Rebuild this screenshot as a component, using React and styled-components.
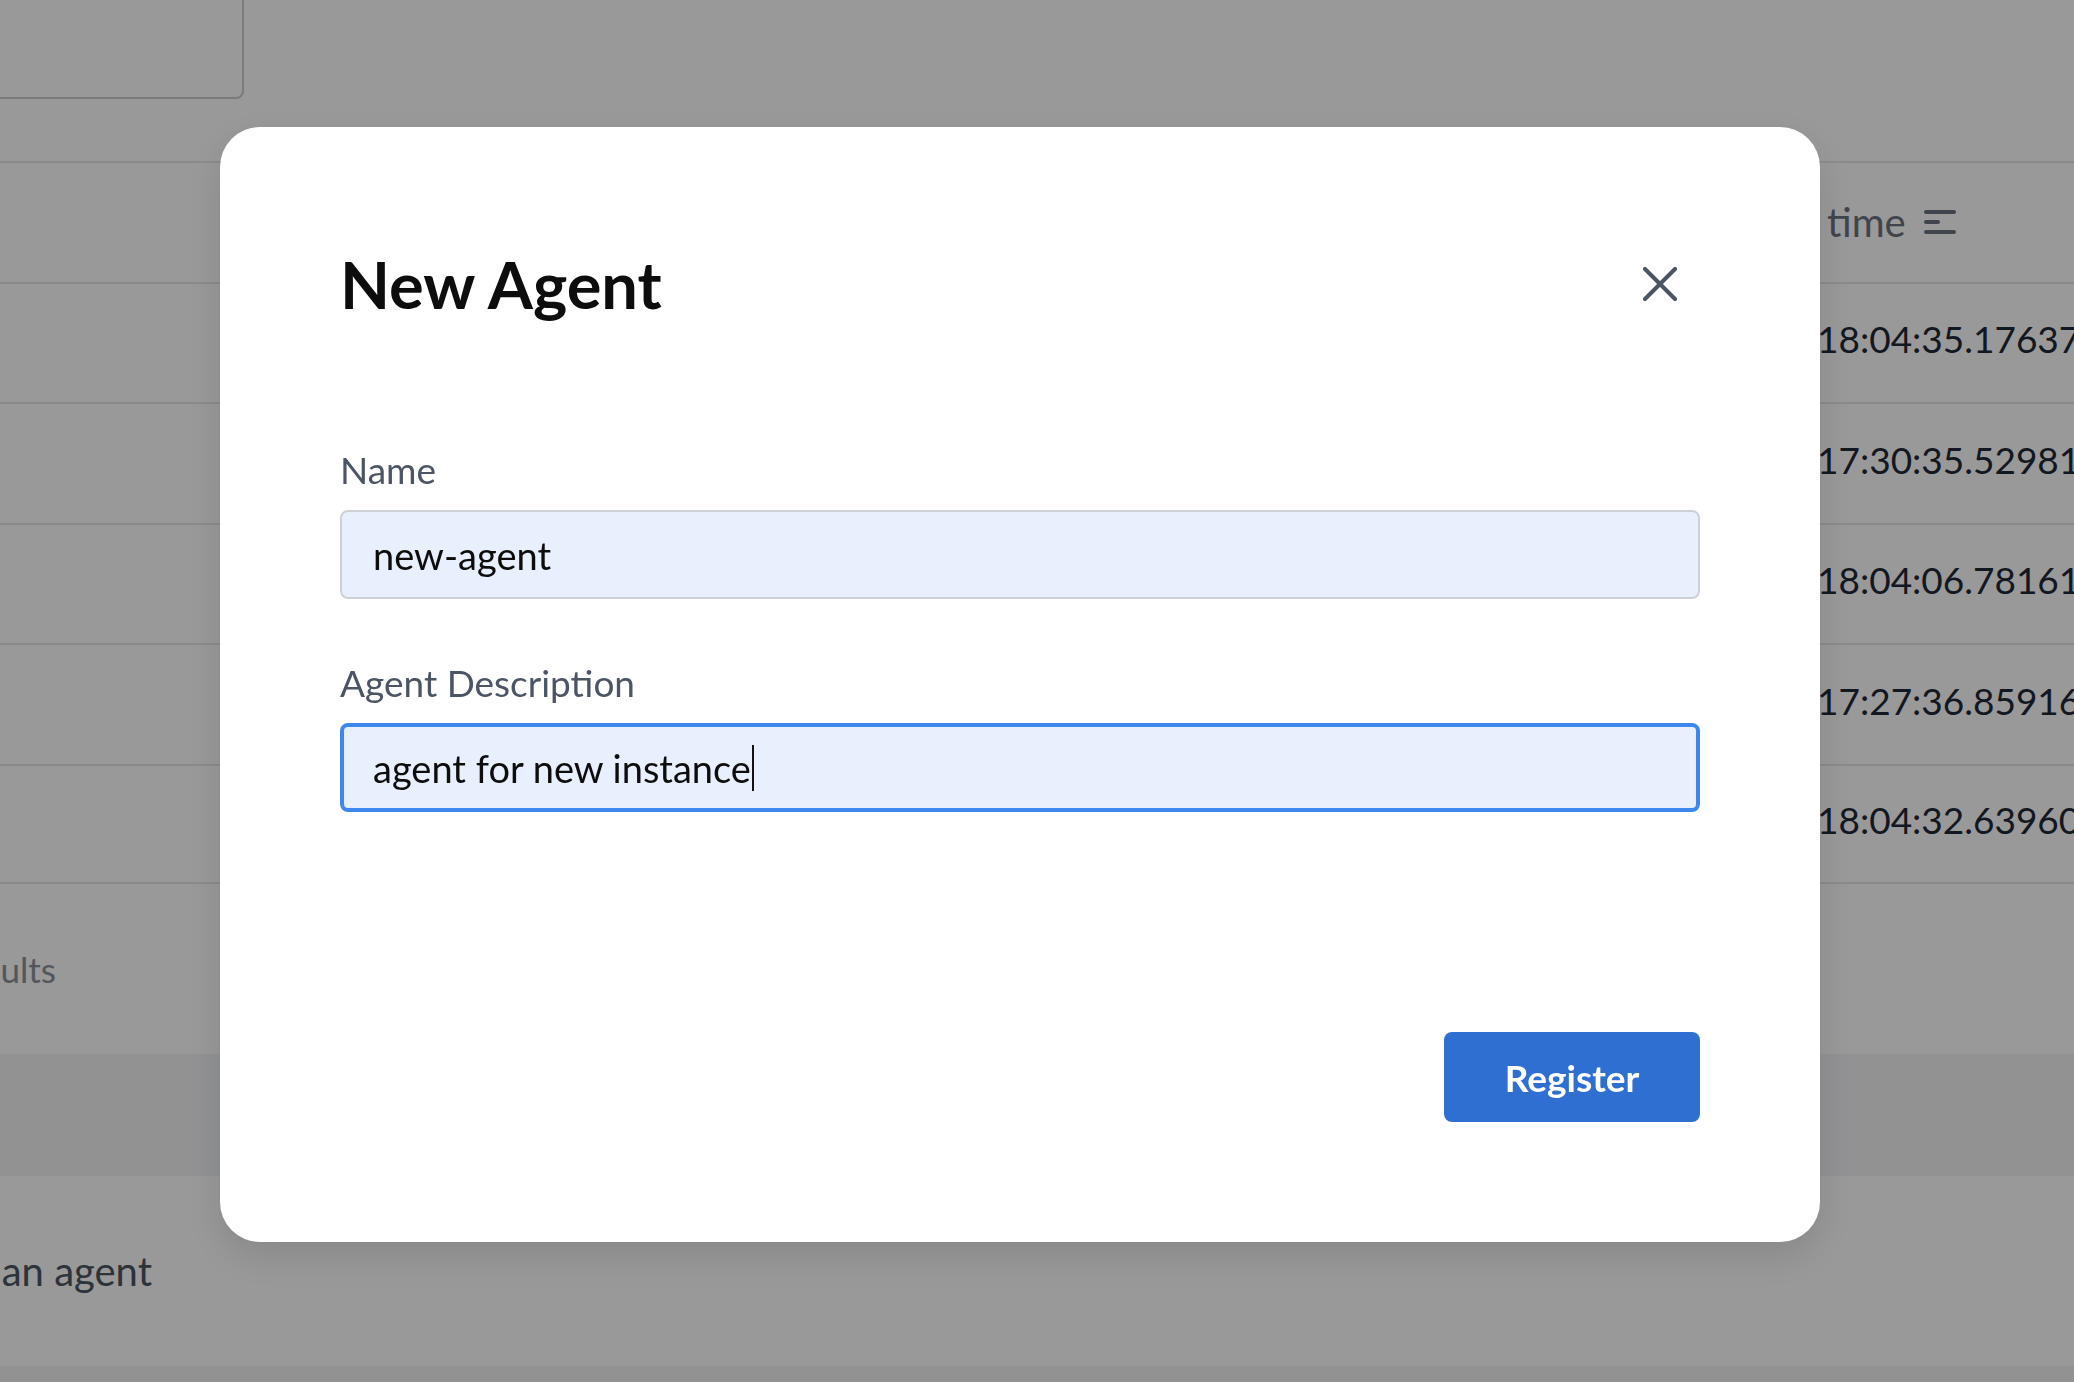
import React from "react";
import styled, { createGlobalStyle } from "styled-components";

const GlobalStyle = createGlobalStyle`
  * {
    box-sizing: border-box;
  }
  html,
  body {
    margin: 0;
    padding: 0;
    overflow: hidden;
    background: #ffffff;
  }
  body {
    font-family: "Lato", "Noto Sans", sans-serif;
    color: #1f2937;
  }
`;

const Page = styled.div`
  width: 2074px;
  height: 1382px;
  overflow: hidden;
  background: #ffffff;
`;

const TopBar = styled.div`
  display: flex;
  align-items: flex-start;
  height: 161px;
`;

const SearchBox = styled.div`
  width: 264px;
  height: 119px;
  margin: -20px 0 0 -20px;
  border: 2px solid #cbced3;
  border-radius: 8px;
`;

const Row = styled.div`
  display: grid;
  grid-template-columns: 1817px 1fr;
  align-items: center;
  height: 120.5px;
  border-top: 2px solid #e5e7eb;
  white-space: nowrap;
  &:last-child {
    border-bottom: 2px solid #e5e7eb;
  }
`;

const HeadCell = styled.div`
  display: flex;
  align-items: center;
  gap: 18px;
  padding-left: 10px;
  font-size: 40px;
  color: #6b7280;
`;

const TimeCell = styled.div`
  font-size: 37px;
  color: #1f2937;
  padding-bottom: 8px;
`;

const ResultsBar = styled.div`
  height: 170px;
  display: flex;
  align-items: center;
`;

const ClippedText = styled.div`
  width: ${(p) => p.$end}px;
  display: flex;
  justify-content: flex-end;
  white-space: nowrap;
  font-size: ${(p) => p.$size}px;
  color: ${(p) => p.$color};
`;

const Band = styled.div`
  height: ${(p) => p.$height}px;
  background: #f3f4f6;
`;

const ActionBar = styled.div`
  height: 190px;
  display: flex;
  align-items: center;
`;

const Overlay = styled.div`
  position: fixed;
  inset: 0;
  background: rgba(0, 0, 0, 0.4);
  display: flex;
  align-items: flex-start;
  padding: 127px 254px 0 220px;
`;

const Dialog = styled.div`
  width: 1600px;
  height: 1115px;
  background: #ffffff;
  border-radius: 40px;
  padding: 120px;
  display: flex;
  flex-direction: column;
  box-shadow: 0 14px 40px rgba(0, 0, 0, 0.12);
`;

const Header = styled.div`
  display: flex;
  align-items: center;
  justify-content: space-between;
  height: 74px;
`;

const Title = styled.h2`
  margin: 0;
  font-size: 65px;
  line-height: 74px;
  font-weight: 700;
  color: #0d0d0d;
`;

const CloseButton = styled.button`
  display: flex;
  width: 34px;
  height: 34px;
  margin-right: 23px;
  padding: 0;
  border: none;
  background: none;
  cursor: pointer;
`;

const Form = styled.div`
  display: flex;
  flex-direction: column;
  gap: 58px;
  margin-top: 123px;
`;

const Field = styled.div`
  display: flex;
  flex-direction: column;
`;

const Label = styled.label`
  font-size: 37px;
  line-height: 52px;
  color: #4b5563;
  margin-bottom: 14px;
`;

const InputBox = styled.div`
  display: flex;
  align-items: center;
  height: 89px;
  padding: 0 ${(p) => (p.$focused ? 29 : 31)}px;
  background: #e8f0fe;
  border: ${(p) => (p.$focused ? "4px solid #3f87f0" : "2px solid #cdd0d4")};
  border-radius: 8px;
  font-size: 38px;
  color: #0d0d0d;
  white-space: nowrap;
`;

const Caret = styled.span`
  display: inline-block;
  width: 2px;
  height: 46px;
  margin-left: 1px;
  background: #111111;
`;

const Actions = styled.div`
  margin-top: auto;
  display: flex;
  justify-content: flex-end;
`;

const RegisterButton = styled.button`
  width: 256px;
  height: 90px;
  border: none;
  border-radius: 8px;
  background: #2f6fd2;
  color: #ffffff;
  font-family: inherit;
  font-size: 37px;
  font-weight: 700;
  cursor: pointer;
`;

const times = [
  "18:04:35.17637",
  "17:30:35.52981",
  "18:04:06.78161",
  "17:27:36.85916",
  "18:04:32.63960",
];

function SortIcon() {
  return (
    <svg width="32" height="24" viewBox="0 0 32 24" fill="none">
      <g stroke="#6b7280" strokeWidth="4" strokeLinecap="round">
        <line x1="2" y1="2" x2="30" y2="2" />
        <line x1="2" y1="12" x2="14" y2="12" />
        <line x1="2" y1="22" x2="30" y2="22" />
      </g>
    </svg>
  );
}

function CloseIcon() {
  return (
    <svg width="34" height="34" viewBox="0 0 34 34" fill="none">
      <g stroke="#4b5563" strokeWidth="4" strokeLinecap="round">
        <line x1="2" y1="2" x2="32" y2="32" />
        <line x1="32" y1="2" x2="2" y2="32" />
      </g>
    </svg>
  );
}

export default function App() {
  return (
    <>
      <GlobalStyle />
      <Page>
        <TopBar>
          <SearchBox />
        </TopBar>
        <div>
          <Row>
            <div />
            <HeadCell>
              time
              <SortIcon />
            </HeadCell>
          </Row>
          {times.map((t) => (
            <Row key={t}>
              <div />
              <TimeCell>{t}</TimeCell>
            </Row>
          ))}
        </div>
        <ResultsBar>
          <ClippedText $end={56} $size={35} $color="#8a919c">
            5 results
          </ClippedText>
        </ResultsBar>
        <Band $height={122} />
        <ActionBar>
          <ClippedText $end={152} $size={40} $color="#4b5563">
            Register an agent
          </ClippedText>
        </ActionBar>
        <Band $height={40} />
      </Page>

      <Overlay>
        <Dialog role="dialog" aria-label="New Agent">
          <Header>
            <Title>New Agent</Title>
            <CloseButton aria-label="Close">
              <CloseIcon />
            </CloseButton>
          </Header>
          <Form>
            <Field>
              <Label>Name</Label>
              <InputBox>new-agent</InputBox>
            </Field>
            <Field>
              <Label>Agent Description</Label>
              <InputBox $focused>
                agent for new instance
                <Caret />
              </InputBox>
            </Field>
          </Form>
          <Actions>
            <RegisterButton>Register</RegisterButton>
          </Actions>
        </Dialog>
      </Overlay>
    </>
  );
}
